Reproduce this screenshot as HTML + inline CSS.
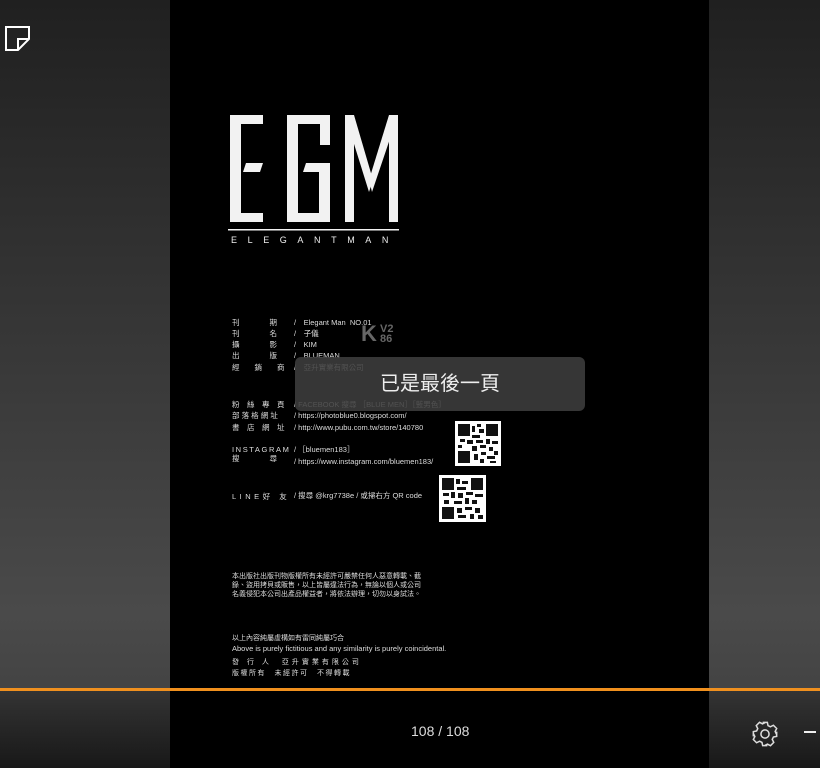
<!DOCTYPE html>
<html><head><meta charset="utf-8"><style>
*{margin:0;padding:0;box-sizing:border-box}
body{width:820px;height:768px;overflow:hidden;position:relative;background:linear-gradient(#202020 0%,#3a3a3a 50%,#4a4a4a 80%,#444 89%);font-family:"Liberation Sans","Noto Sans CJK TC",sans-serif}
.bar{position:absolute;left:0;top:690px;width:820px;height:78px;background:linear-gradient(#343434,#181818)}
.page{position:absolute;left:170px;top:0;width:539px;height:768px;background:#000}
.orange{position:absolute;left:0;top:688px;width:820px;height:3px;background:#f0901e}
.t{position:absolute;color:#ddd;font-size:7.5px;white-space:nowrap;line-height:9px}
.ov{position:absolute;left:295px;top:357px;width:290px;height:54px;background:rgba(62,62,62,.88);border-radius:6px;color:#eee;font-size:20px;text-align:center;line-height:54px}
</style></head><body>
<div class="bar"></div>
<div class="page"></div>
<div class="orange"></div>
<svg style="position:absolute;left:5px;top:26px" width="26" height="26"><path d="M1 1H24V13L13 24H1Z M13 24V13H24" fill="none" stroke="#fff" stroke-width="2"/></svg>

<svg style="position:absolute;left:0;top:0" width="820" height="768">
<g fill="#f2f2f2">
<rect x="230" y="115" width="33" height="9"/><rect x="230" y="115" width="11" height="107"/><rect x="230" y="213" width="33" height="9"/>
<polygon points="246,163 263,163 260,172 243,172"/>
<rect x="287" y="115" width="43" height="9"/><rect x="287" y="115" width="11" height="107"/><rect x="287" y="213" width="43" height="9"/>
<rect x="320" y="115" width="10" height="30"/><rect x="319" y="163" width="11" height="59"/><polygon points="306,163 330,163 330,172 303,172"/>
<rect x="345" y="115" width="9" height="107"/><rect x="389" y="115" width="9" height="107"/>
<polygon points="345,115 354,115 373,180 369,192"/><polygon points="389,115 398,115 372,192 369,180"/>
<rect x="228" y="229" width="171" height="1.5"/>
</g>
<text x="231" y="243" fill="#eee" font-size="9" font-family="Liberation Sans" letter-spacing="10.6">ELEGANTMAN</text>
<text x="361" y="341" fill="#666" font-size="22" font-weight="bold" font-family="Liberation Sans">K</text>
<text x="380" y="332" fill="#666" font-size="11" font-weight="bold" font-family="Liberation Sans">V2</text>
<text x="380" y="342" fill="#666" font-size="11" font-weight="bold" font-family="Liberation Sans">86</text>
<g fill="#fff">
<rect x="455" y="421" width="46" height="45"/><rect x="439" y="475" width="47" height="47"/>
</g>
<g fill="#111">
<g transform="translate(458,424)">
<rect width="12" height="12"/><rect x="28" width="12" height="12"/><rect y="27" width="12" height="12"/>
<rect x="14" y="2" width="3" height="6"/><rect x="19" y="0" width="4" height="3"/><rect x="21" y="5" width="5" height="4"/><rect x="14" y="11" width="8" height="3"/><rect x="2" y="15" width="5" height="3"/><rect x="9" y="16" width="6" height="4"/><rect x="18" y="16" width="7" height="3"/><rect x="28" y="15" width="4" height="5"/><rect x="34" y="17" width="6" height="3"/><rect x="0" y="21" width="4" height="3"/><rect x="14" y="22" width="5" height="5"/><rect x="22" y="21" width="6" height="3"/><rect x="31" y="23" width="4" height="4"/><rect x="16" y="30" width="4" height="6"/><rect x="23" y="28" width="5" height="3"/><rect x="29" y="32" width="8" height="3"/><rect x="22" y="35" width="4" height="4"/><rect x="36" y="27" width="4" height="4"/><rect x="32" y="37" width="6" height="2"/>
</g>
<g transform="translate(442,478)">
<rect width="12" height="12"/><rect x="29" width="12" height="12"/><rect y="29" width="12" height="12"/>
<rect x="14" y="1" width="4" height="5"/><rect x="20" y="3" width="6" height="3"/><rect x="15" y="9" width="9" height="3"/><rect x="1" y="15" width="6" height="3"/><rect x="9" y="14" width="4" height="6"/><rect x="16" y="15" width="5" height="5"/><rect x="24" y="14" width="7" height="3"/><rect x="33" y="16" width="8" height="3"/><rect x="2" y="22" width="5" height="4"/><rect x="12" y="23" width="8" height="3"/><rect x="23" y="20" width="4" height="6"/><rect x="30" y="22" width="5" height="4"/><rect x="15" y="30" width="5" height="5"/><rect x="23" y="29" width="7" height="3"/><rect x="33" y="30" width="5" height="5"/><rect x="16" y="37" width="8" height="3"/><rect x="28" y="36" width="4" height="5"/><rect x="36" y="37" width="5" height="4"/>
</g>
</g>
</svg>

<div class="t" style="left:232px;top:318px">刊　　　　期</div><div class="t" style="left:294px;top:318px">/　Elegant Man&nbsp; NO.01</div>
<div class="t" style="left:232px;top:329px">刊　　　　名</div><div class="t" style="left:294px;top:329px">/　子儀</div>
<div class="t" style="left:232px;top:340px">攝　　　　影</div><div class="t" style="left:294px;top:340px">/　KIM</div>
<div class="t" style="left:232px;top:351px">出　　　　版</div><div class="t" style="left:294px;top:351px">/　BLUEMAN</div>
<div class="t" style="left:232px;top:363px">經　　銷　　商</div><div class="t" style="left:294px;top:363px">/　亞升實業有限公司</div>
<div class="t" style="left:232px;top:400px">粉　絲　專　頁</div><div class="t" style="left:294px;top:400px">/ FACEBOOK 搜尋 ［BLUE MEN］［藍男色］</div>
<div class="t" style="left:232px;top:411px">部 落 格 網 址</div><div class="t" style="left:294px;top:411px">/ https://photoblue0.blogspot.com/</div>
<div class="t" style="left:232px;top:423px">書　店　網　址</div><div class="t" style="left:294px;top:423px">/ http://www.pubu.com.tw/store/140780</div>
<div class="t" style="left:232px;top:445px;letter-spacing:1.6px">INSTAGRAM</div><div class="t" style="left:294px;top:445px">/ ［bluemen183］</div>
<div class="t" style="left:232px;top:454px">搜　　　　尋</div><div class="t" style="left:294px;top:457px">/ https://www.instagram.com/bluemen183/</div>
<div class="t" style="left:232px;top:492px;letter-spacing:3.5px">LINE好 友</div><div class="t" style="left:294px;top:491px">/ 搜尋 @krg7738e / 或掃右方 QR code</div>
<div class="t" style="left:232px;top:572px;font-size:7px">本出版社出版刊物版權所有未經許可嚴禁任何人惡意轉載、截<br>錄、盜用拷貝或販售，以上皆屬違法行為，無論以個人或公司<br>名義侵犯本公司出產品權益者，將依法辦理，切勿以身試法。</div>
<div class="t" style="left:232px;top:634px;font-size:7px">以上內容純屬虛構如有雷同純屬巧合</div>
<div class="t" style="left:232px;top:644px;font-size:7.5px">Above is purely fictitious and any similarity is purely coincidental.</div>
<div class="t" style="left:232px;top:658px;font-size:7px;letter-spacing:3px">發 行 人　亞升實業有限公司</div>
<div class="t" style="left:232px;top:669px;font-size:7px;letter-spacing:1.5px">版權所有　未經許可　不得轉載</div>

<div class="ov">已是最後一頁</div>
<div style="position:absolute;left:411px;top:723px;color:#ddd;font-size:14px">108 / 108</div>
<svg style="position:absolute;left:751px;top:720px" width="28" height="28" viewBox="0 0 24 24"><path fill="none" stroke="#ddd" stroke-width="1.3" d="M10 2h4l.6 2.8 2 1 2.6-1.3 2.8 2.8-1.3 2.6 1 2L22 10v4l-2.8.6-1 2 1.3 2.6-2.8 2.8-2.6-1.3-2 1L14 22h-4l-.6-2.8-2-1-2.6 1.3-2.8-2.8 1.3-2.6-1-2L2 14v-4l2.8-.6 1-2-1.3-2.6 2.8-2.8 2.6 1.3 2-1z"/><circle cx="12" cy="12" r="3.5" fill="none" stroke="#ddd" stroke-width="1.3"/></svg>
<div style="position:absolute;left:804px;top:731px;width:12px;height:2px;background:#eee"></div>
</body></html>
